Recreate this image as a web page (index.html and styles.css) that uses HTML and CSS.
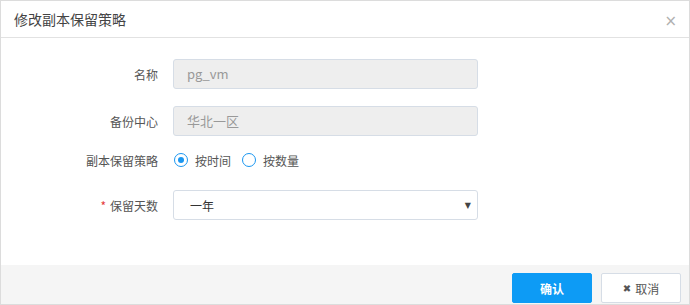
FILE: index.html
```html
<!DOCTYPE html>
<html lang="zh">
<head>
<meta charset="utf-8">
<title>修改副本保留策略</title>
<link rel="stylesheet" href="styles.css">
</head>
<body>
<div class="dialog">
  <div class="dialog-header">
    <span class="dialog-title">修改副本保留策略</span>
    <span class="dialog-close">×</span>
  </div>
  <div class="dialog-body">
    <div class="form-row row-name">
      <label class="form-label">名称</label>
      <div class="form-input disabled">pg_vm</div>
    </div>
    <div class="form-row row-center">
      <label class="form-label">备份中心</label>
      <div class="form-input disabled">华北一区</div>
    </div>
    <div class="form-row row-radio">
      <label class="form-label">副本保留策略</label>
      <div class="radio-group">
        <span class="radio checked"></span><span class="radio-text">按时间</span>
        <span class="radio"></span><span class="radio-text">按数量</span>
      </div>
    </div>
    <div class="form-row row-days">
      <label class="form-label"><span class="required">*</span>保留天数</label>
      <div class="form-select"><span>一年</span><span class="caret">▼</span></div>
    </div>
  </div>
  <div class="dialog-footer">
    <button class="btn btn-primary">确认</button>
    <button class="btn btn-default"><span class="btn-icon">✖</span>取消</button>
  </div>
</div>
</body>
</html>
```
FILE: styles.css
```css
* { box-sizing: border-box; }
html, body { margin: 0; padding: 0; background: #fff; }
body {
  font-family: "Noto Sans CJK SC", "Liberation Sans", sans-serif;
  font-size: 12px;
  color: #333;
}
.dialog {
  width: 690px;
  height: 305px;
  border: 1px solid #dcdcdc;
  display: flex;
  flex-direction: column;
  background: #fff;
}
.dialog-header {
  height: 37px;
  border-bottom: 1px solid #e2e2e2;
  display: flex;
  align-items: center;
  justify-content: space-between;
  padding: 0 12px 0 13px;
}
.dialog-title {
  font-size: 14px;
  color: #444;
}
.dialog-close {
  font-family: "DejaVu Sans", sans-serif;
  font-size: 15px;
  color: #b0b0b0;
  margin-top: 3px;
}
.dialog-body {
  flex: 1;
  padding-top: 21px;
}
.form-row {
  display: flex;
  align-items: center;
  height: 30px;
}
.row-name { margin-bottom: 17px; }
.row-center { margin-bottom: 9px; }
.row-radio { margin-bottom: 15px; }
.form-label {
  width: 157px;
  text-align: right;
  color: #555;
  font-size: 12px;
  margin-right: 15px;
}
.required {
  color: #e4393c;
  margin-right: 4px;
}
.form-input {
  width: 305px;
  height: 30px;
  border: 1px solid #d6dde6;
  border-radius: 3px;
  padding: 0 13px;
  line-height: 28px;
  font-size: 13px;
  color: #999;
}
.form-input.disabled { background: #eeeeee; }
.radio-group {
  display: flex;
  align-items: center;
  padding-left: 1px;
}
.radio {
  width: 14px;
  height: 14px;
  border: 1px solid #1a96f0;
  border-radius: 50%;
  display: inline-flex;
  align-items: center;
  justify-content: center;
  margin-right: 7px;
}
.radio.checked::after {
  content: "";
  width: 6px;
  height: 6px;
  border-radius: 50%;
  background: #1a96f0;
}
.radio-text {
  color: #555;
  font-size: 12px;
  margin-right: 11px;
}
.form-select {
  width: 305px;
  height: 30px;
  border: 1px solid #d6dde6;
  border-radius: 3px;
  padding: 0 6px 0 16px;
  display: flex;
  align-items: center;
  justify-content: space-between;
  font-size: 12px;
  color: #333;
}
.caret {
  font-family: "DejaVu Sans", sans-serif;
  font-size: 8px;
  color: #444;
}
.dialog-footer {
  height: 39px;
  background: #f5f5f5;
  display: flex;
  justify-content: flex-end;
  align-items: flex-start;
  padding: 8px 8px 0 0;
  gap: 9px;
}
.btn {
  width: 80px;
  height: 30px;
  border-radius: 2px;
  font-family: "Noto Sans CJK SC", "Liberation Sans", sans-serif;
  font-size: 12px;
  display: flex;
  align-items: center;
  justify-content: center;
  padding: 0;
  cursor: pointer;
}
.btn-primary {
  background: #0d9bf5;
  border: 1px solid #0d9bf5;
  color: #fff;
  font-weight: bold;
}
.btn-default {
  background: #fff;
  border: 1px solid #d6dde6;
  color: #555;
}
.btn-icon {
  font-family: "DejaVu Sans", sans-serif;
  font-size: 10px;
  color: #555;
  margin-right: 4px;
}
```
